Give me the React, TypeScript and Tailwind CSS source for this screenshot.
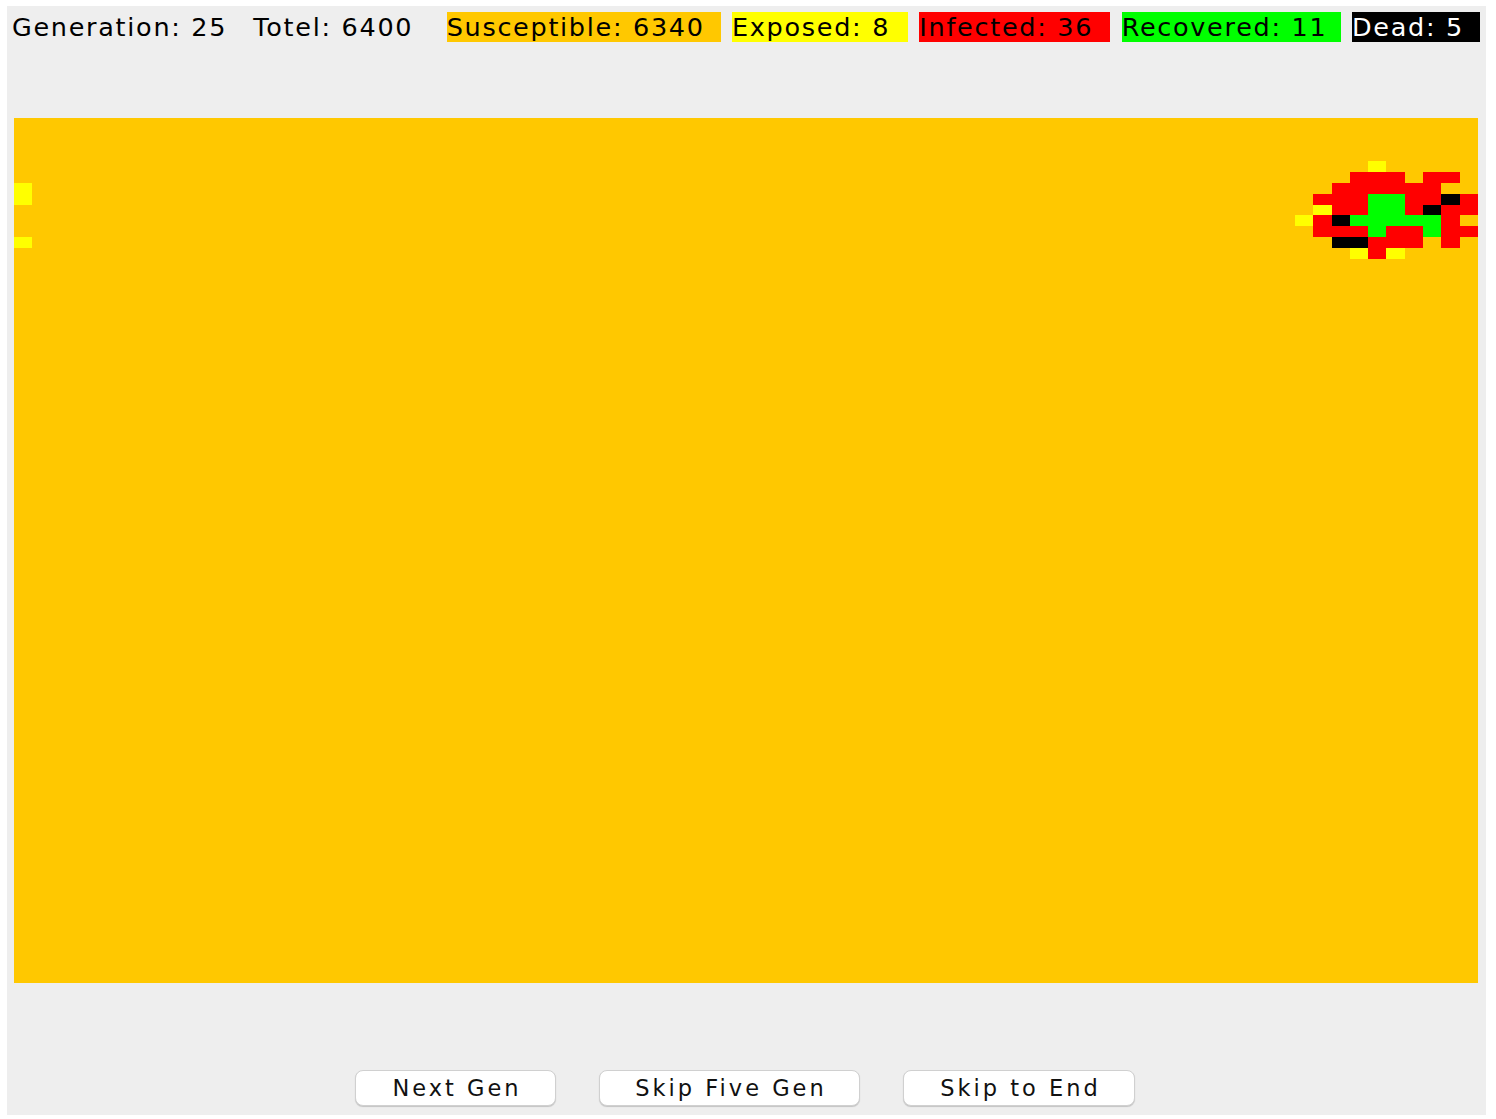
import React from "react";

const SIZE = 80;

// cluster near the top-right corner, rows 4-12, cols 70-79
const cluster: Record<number, string> = {
  4: "....Y.....",
  5: "...III.II.",
  6: "..IIIIII..",
  7: ".IIIRRIIDI",
  8: ".YIIRRIDII",
  9: "YIDRRRRRI.",
  10: ".IIIRIIRII",
  11: "..DDIII.I.",
  12: "...YIY....",
};

const edge: Record<string, string> = { "6,0": "Y", "7,0": "Y", "11,0": "Y" };

const colors: Record<string, string> = {
  ".": "bg-[#ffc800]",
  Y: "bg-[#ffff00]",
  I: "bg-[#ff0000]",
  R: "bg-[#00ff00]",
  D: "bg-black",
};

function stateAt(r: number, c: number) {
  if (edge[`${r},${c}`]) return edge[`${r},${c}`];
  const row = cluster[r];
  if (row && c >= 70) return row[c - 70];
  return ".";
}

const stats = [
  { text: "Susceptible: 6340", w: "w-[274px]", cls: "bg-[#ffc800] text-black" },
  { text: "Exposed: 8", w: "w-[176px]", cls: "bg-[#ffff00] text-black" },
  { text: "Infected: 36", w: "w-[191px]", cls: "bg-[#ff0000] text-black" },
  { text: "Recovered: 11", w: "w-[219px]", cls: "bg-[#00ff00] text-black" },
  { text: "Dead: 5", w: "w-[128px]", cls: "bg-black text-white" },
];

const buttons = [
  { label: "Next Gen", w: "w-[201px]" },
  { label: "Skip Five Gen", w: "w-[261px]" },
  { label: "Skip to End", w: "w-[232px]" },
];

export default function App() {
  const cells = [];
  for (let r = 0; r < SIZE; r++) {
    for (let c = 0; c < SIZE; c++) {
      cells.push(<div key={`${r}-${c}`} className={colors[stateAt(r, c)]} />);
    }
  }

  return (
    <div className="h-[1119px] w-[1496px] bg-white pl-[7px] pt-[6px] font-['DejaVu_Sans',sans-serif]">
      <div className="flex h-[1109px] w-[1479px] flex-col bg-[#eeeeee]">
        {/* counters */}
        <div className="flex gap-[11.33px] pl-[5px] pt-[6px] text-[25.5px] leading-[30px] tracking-[1.7px] whitespace-nowrap">
          <div className="w-[230px] text-black">Generation: 25</div>
          <div className="w-[182px] text-black">Totel: 6400</div>
          {stats.map((s) => (
            <div key={s.text} className={`${s.w} ${s.cls} h-[30px]`}>
              {s.text}
            </div>
          ))}
        </div>

        {/* world */}
        <div className="ml-[7px] mt-[76px] grid h-[865px] w-[1464px] grid-cols-[repeat(80,minmax(0,1fr))] grid-rows-[repeat(80,minmax(0,1fr))]">
          {cells}
        </div>

        {/* controls */}
        <div className="mt-[87px] flex justify-center gap-[43px] pr-[3px]">
          {buttons.map((b) => (
            <button
              key={b.label}
              className={`${b.w} h-[36px] rounded-[8px] border border-[#d0d0d0] bg-white pl-[3px] text-[22.5px] leading-none tracking-[3px] text-[#111] shadow-[0_1px_1px_rgba(0,0,0,0.18)]`}
            >
              {b.label}
            </button>
          ))}
        </div>
      </div>
    </div>
  );
}
